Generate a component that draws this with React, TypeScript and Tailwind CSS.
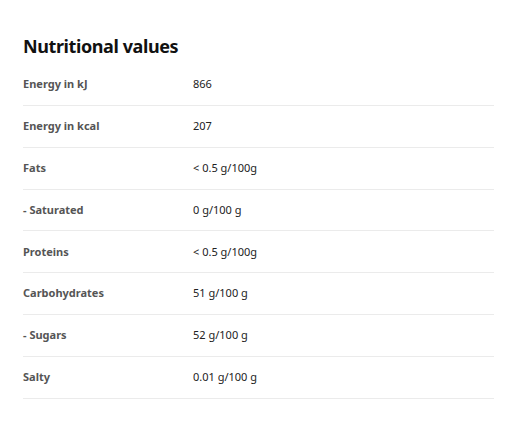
import React from "react";

const rows: [string, string][] = [
  ["Energy in kJ", "866"],
  ["Energy in kcal", "207"],
  ["Fats", "< 0.5 g/100g"],
  ["- Saturated", "0 g/100 g"],
  ["Proteins", "< 0.5 g/100g"],
  ["Carbohydrates", "51 g/100 g"],
  ["- Sugars", "52 g/100 g"],
  ["Salty", "0.01 g/100 g"],
];

export default function App() {
  return (
    <div className="w-[511px] h-[428px] bg-white" style={{ fontFamily: '"Noto Sans", "Open Sans", sans-serif' }}>
      <div className="pl-[23px] pt-[34px] w-[494px]">
        <h2 className="text-[18px] leading-[24px] font-bold text-[#111] tracking-[-0.4px]">Nutritional values</h2>
        <div className="mt-[6px]">
          {rows.map(([k, v]) => (
            <div key={k} className="flex items-center h-[41.85px] border-b border-[#ebebeb] text-[11px]">
              <div className="w-[170px] font-bold text-[#555]">{k}</div>
              <div className="text-[#222]">{v}</div>
            </div>
          ))}
        </div>
      </div>
    </div>
  );
}
